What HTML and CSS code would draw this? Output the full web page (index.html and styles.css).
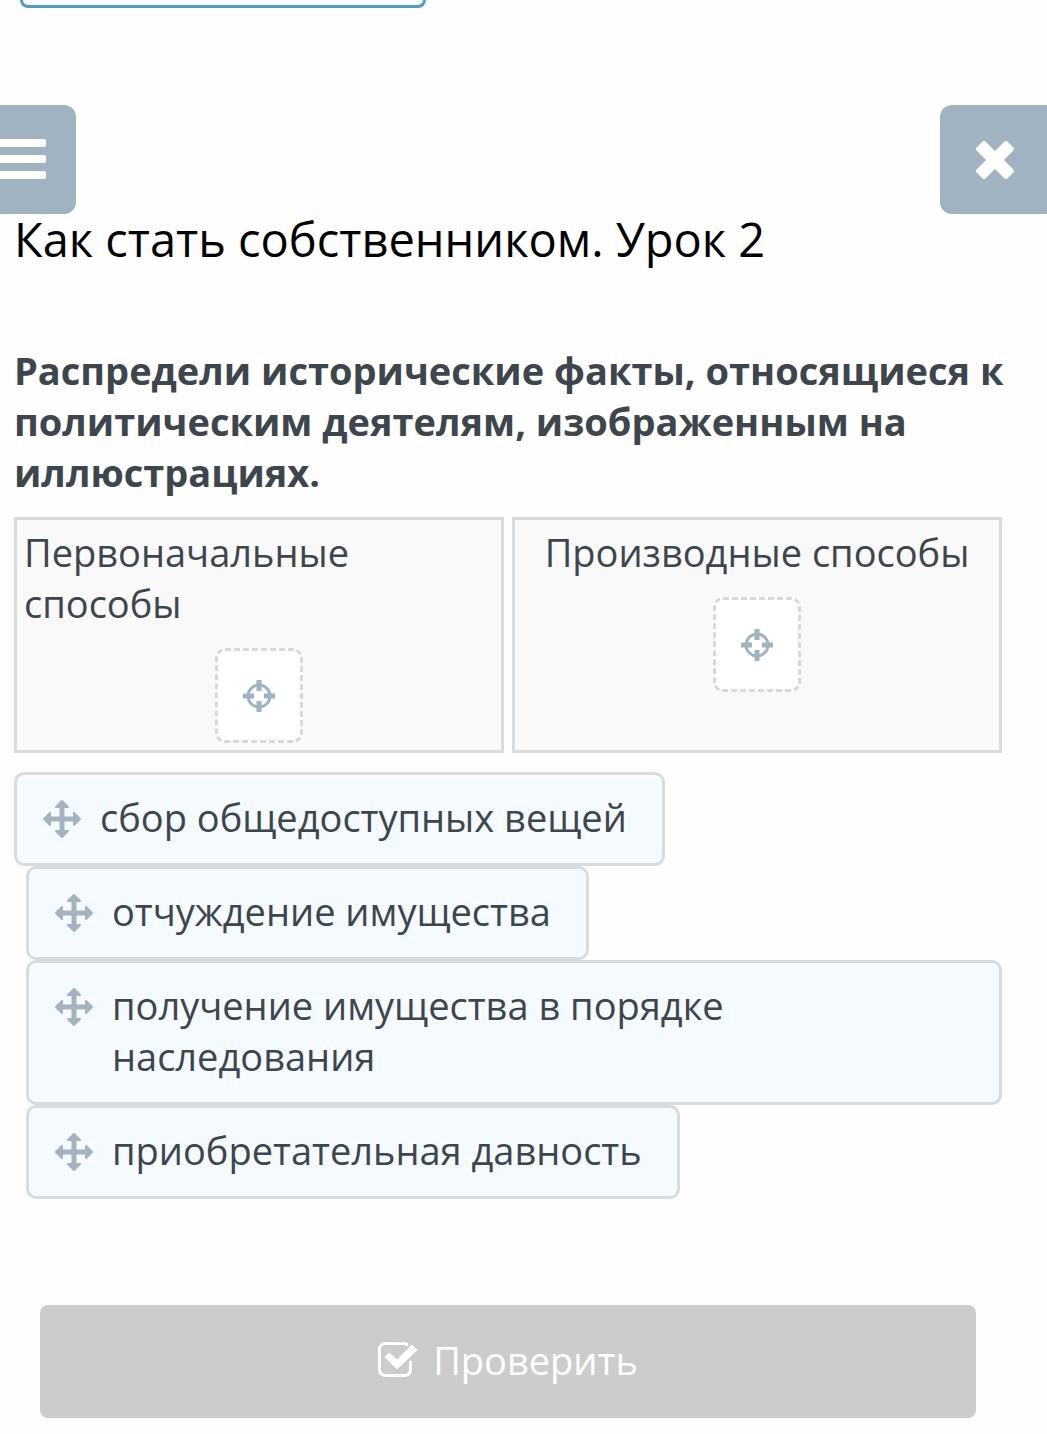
FILE: index.html
```html
<!DOCTYPE html>
<html lang="ru">
<head>
    <meta charset="UTF-8">
    <meta name="viewport" content="width=device-width, initial-scale=1.0">
    <title>Как стать собственником. Урок 2</title>
    <link rel="stylesheet" href="styles.css">
</head>
<body>
    <!-- Shared icons -->
    <svg class="sprite" aria-hidden="true">
        <symbol id="icon-target" viewBox="0 0 34 34">
            <circle cx="17" cy="17" r="11" fill="none" stroke="currentColor" stroke-width="3"/>
            <path d="M17 3.500v6M17 24.500v6M3.500 17h6M24.500 17h6" fill="none" stroke="currentColor" stroke-width="5" stroke-linecap="square"/>
        </symbol>
        <symbol id="icon-move" viewBox="0 0 38 38">
            <path d="M19 7v24M7 19h24" fill="none" stroke="currentColor" stroke-width="5"/>
            <path d="M19 1l6 6h-12zM19 37l6-6h-12zM1 19l6-6v12zM37 19l-6-6v12z" fill="currentColor" stroke="currentColor" stroke-width="2" stroke-linejoin="round"/>
        </symbol>
    </svg>

    <div class="top-frame"></div>

    <nav class="toolbar">
        <button type="button" class="tool-btn tool-menu" aria-label="Меню">
            <svg width="46" height="42" viewBox="0 0 46 42">
                <path d="M0 0h44q2 0 2 2v4q0 2-2 2H0zM0 16h44q2 0 2 2v4q0 2-2 2H0zM0 32h44q2 0 2 2v4q0 2-2 2H0z" fill="currentColor"/>
            </svg>
        </button>
        <button type="button" class="tool-btn tool-close" aria-label="Закрыть">
            <svg width="38" height="38" viewBox="0 0 38 38">
                <path d="M8 2L19 13L30 2L36 8L25 19L36 30L30 36L19 25L8 36L2 30L13 19L2 8z" fill="currentColor" stroke="currentColor" stroke-width="4" stroke-linejoin="round"/>
            </svg>
        </button>
    </nav>

    <main class="content">
        <h1>Как стать собственником. Урок 2</h1>
        <h2>Распредели исторические факты, относящиеся к политическим деятелям, изображенным на иллюстрациях.</h2>

        <div class="groups">
            <section class="group">
                <p>Первоначальные способы</p>
                <div class="drop-zone">
                    <svg width="34" height="34"><use href="#icon-target"/></svg>
                </div>
            </section>
            <section class="group">
                <p>Производные способы</p>
                <div class="drop-zone">
                    <svg width="34" height="34"><use href="#icon-target"/></svg>
                </div>
            </section>
        </div>

        <div class="answers">
            <button type="button" class="answer">
                <svg width="38" height="38"><use href="#icon-move"/></svg>
                <span>сбор общедоступных вещей</span>
            </button>
            <button type="button" class="answer">
                <svg width="38" height="38"><use href="#icon-move"/></svg>
                <span>отчуждение имущества</span>
            </button>
            <button type="button" class="answer">
                <svg width="38" height="38"><use href="#icon-move"/></svg>
                <span>получение имущества в порядке наследования</span>
            </button>
            <button type="button" class="answer">
                <svg width="38" height="38"><use href="#icon-move"/></svg>
                <span>приобретательная давность</span>
            </button>
        </div>

        <button type="button" class="btn-check" disabled>
            <svg width="40" height="38" viewBox="0 0 40 38">
                <path d="M29 2.500Q28 1.500 26 1.500H8Q1.500 1.500 1.500 8V27Q1.500 33.500 8 33.500H26Q32.500 33.500 32.500 27V20" fill="none" stroke="currentColor" stroke-width="3" stroke-linecap="round"/>
                <path d="M7 15l4-4 8 7L34 3l5 5-20 19z" fill="currentColor" stroke="currentColor" stroke-linejoin="round"/>
            </svg>
            <span>Проверить</span>
        </button>
    </main>
</body>
</html>
```
FILE: styles.css
```css
* {
    box-sizing: border-box;
    margin: 0;
    padding: 0;
}

body {
    font-family: "Open Sans", "Noto Sans", sans-serif;
    font-size: 38px;
    line-height: 51px;
    color: #3d464d;
    background: #fefefe;
}

button {
    font: inherit;
    color: inherit;
    border: none;
    cursor: pointer;
}

svg {
    flex: none;
}

.sprite {
    display: none;
}

.top-frame {
    width: 406px;
    height: 8px;
    margin-left: 20px;
    border: 3px solid #4c9fc4;
    border-top: none;
    border-radius: 0 0 12px 12px;
}

.toolbar {
    display: flex;
    justify-content: space-between;
    margin-top: 97px;
}

.tool-btn {
    display: flex;
    align-items: center;
    height: 109px;
    background: #9fb3c0;
    color: #fff;
}

.tool-menu {
    padding-right: 30px;
    border-radius: 0 12px 12px 0;
}

.tool-close {
    padding: 0 33px 0 36px;
    border-radius: 12px 0 0 12px;
}

.content {
    padding: 0 45px 16px 14px;
}

h1 {
    font-size: 47px;
    font-weight: 400;
    line-height: 50px;
    color: #000;
}

h2 {
    margin: 81px -16px 0 0;
    font-size: 38px;
    font-weight: 700;
}

.groups {
    display: grid;
    grid-template-columns: 1fr 1fr;
    gap: 8px;
    margin-top: 19px;
}

.group {
    display: flex;
    flex-direction: column;
    align-items: center;
    gap: 19px;
    padding: 7px;
    border: 3px solid #d6dce0;
    background: #f9f9f9;
}

.drop-zone {
    display: flex;
    align-items: center;
    justify-content: center;
    width: 88px;
    height: 95px;
    border: 3px dashed #d6d9db;
    border-radius: 10px;
    background: #fff;
    color: #9fb3c0;
}

.answers {
    display: flex;
    flex-direction: column;
    align-items: flex-start;
    margin-top: 19px;
}

.answer {
    display: flex;
    gap: 19px;
    margin-left: 12px;
    padding: 17px 35px 20px 26px;
    border: 3px solid #d6dce0;
    border-radius: 10px;
    background: #f5faff;
    text-align: left;
}

.answer:first-child {
    margin-left: 0;
}

.answer svg {
    margin-top: 8px;
    color: #a3b4c0;
}

.btn-check {
    display: flex;
    align-items: center;
    justify-content: center;
    gap: 15px;
    width: calc(100% - 52px);
    height: 113px;
    margin: 106px auto 0;
    padding-bottom: 2px;
    border-radius: 8px;
    background: #ccc;
    color: #fff;
    cursor: default;
}
```
